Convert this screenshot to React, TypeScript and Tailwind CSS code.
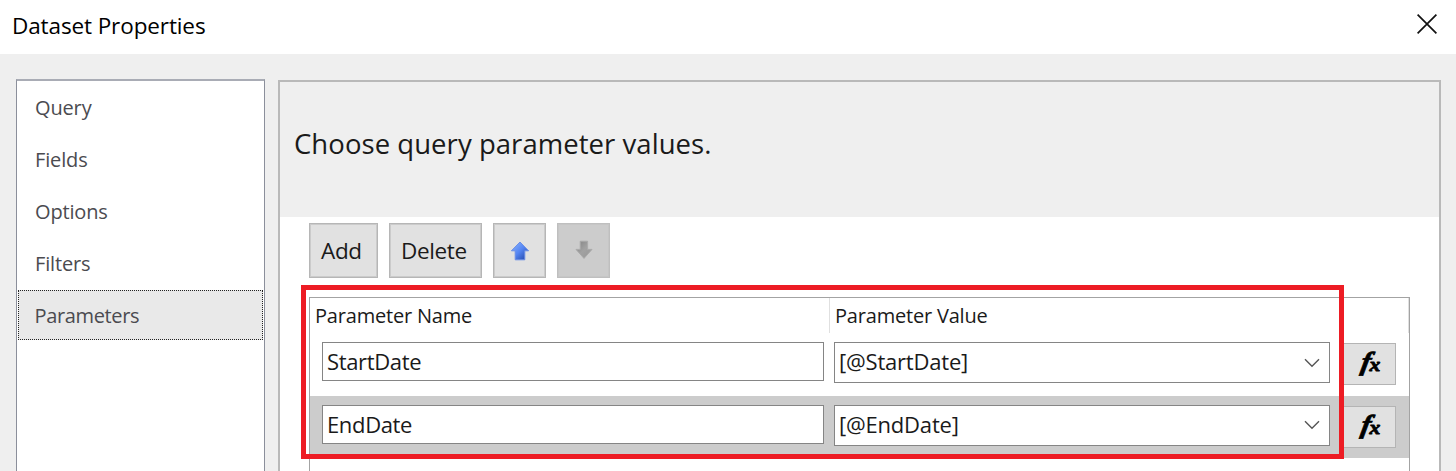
import React from "react";

const navItems = ["Query", "Fields", "Options", "Filters"];

const rows = [
  { name: "StartDate", value: "[@StartDate]", selected: false },
  { name: "EndDate", value: "[@EndDate]", selected: true },
];

function CloseIcon() {
  return (
    <svg width="20" height="20" viewBox="0 0 20 20" fill="none" stroke="#111" strokeWidth="1.7">
      <path d="M0.6 0.6 19.4 19.4M19.4 0.6 0.6 19.4" />
    </svg>
  );
}

function MoveIcon({ down = false }: { down?: boolean }) {
  const id = down ? "moveDown" : "moveUp";
  return (
    <svg width="20" height="20" viewBox="0 0 20 20" className={down ? "-translate-y-px" : ""}>
      <defs>
        <linearGradient id={id} x1="0" y1="0" x2="1" y2="1">
          <stop offset="0" stopColor={down ? "#828282" : "#8fb8ff"} />
          <stop offset="0.5" stopColor={down ? "#a2a2a2" : "#5585f2"} />
          <stop offset="1" stopColor={down ? "#979797" : "#1c3f9e"} />
        </linearGradient>
      </defs>
      <path
        d={down ? "M6.2 1.2H13.6V9.4H18L10 18.4 2 9.4H6.2Z" : "M10 1 18.6 9.8H14.8V18.8H5.2V9.8H1.4Z"}
        fill={`url(#${id})`}
        stroke={down ? "#aaaaaa" : "#6a8ee6"}
        strokeWidth="1"
        strokeLinejoin="round"
      />
    </svg>
  );
}

function Chevron() {
  return (
    <svg width="16" height="10" viewBox="0 0 16 10" fill="none" stroke="#555" strokeWidth="1.4">
      <path d="M1 1.2 8 8.2 15 1.2" />
    </svg>
  );
}

function FxButton() {
  return (
    <button className="flex h-[42px] w-[53px] items-center justify-center border border-[#b4b4b4] bg-[#e1e1e1]">
      <svg
        width="40"
        height="36"
        viewBox="0 0 40 36"
        fill="#000"
        stroke="#000"
        strokeWidth="0.8"
        fontFamily="'Liberation Serif', serif"
        fontStyle="italic"
        fontWeight="700"
        className="overflow-visible"
      >
        <text fontSize="26" transform="translate(10 23.5) skewX(-10) scale(1.12 1)">f</text>
        <text fontSize="18" transform="translate(19.5 25) scale(1.2 1)">x</text>
      </svg>
    </button>
  );
}

export default function App() {
  return (
    <div className="flex h-[471px] w-[1456px] flex-col overflow-hidden bg-[#efefef] font-['Open_Sans','Noto_Sans',sans-serif] text-[#1a1a1a]">
      <header className="flex h-[54px] shrink-0 items-center justify-between bg-white pr-[19px] pl-3 text-black">
        <h1 className="-mt-0.5 text-[22.5px] leading-[52px] tracking-[-0.11px]">Dataset Properties</h1>
        <button aria-label="Close" className="-mt-1.5"><CloseIcon /></button>
      </header>

      <div className="flex min-h-0 flex-1">
        <nav className="mt-[25px] ml-[16px] flex w-[249px] shrink-0 flex-col border-x border-t-2 border-x-[#8b8f9b] border-t-[#a9acb5] bg-white pt-[1px] text-[20px] tracking-[-0.15px] text-[#4b4b50]">
          {navItems.map((n) => (
            <a key={n} className="flex h-[52px] items-center pl-[18px]">{n}</a>
          ))}
          <a className="mr-[1px] ml-[1px] flex h-[50px] items-center border border-dotted border-[#222] bg-[#e9e9e9] pt-0.5 pl-[15.5px] tracking-[-0.35px]">Parameters</a>
        </nav>

        <main className="mt-[26px] ml-[13px] flex w-[1163px] shrink-0 flex-col border-x-2 border-t-2 border-[#b9b9b9] bg-white">
          <div className="flex h-[135px] shrink-0 items-center bg-[#efefef] pl-[14px]">
            <h2 className="-mt-3 text-[27.5px] tracking-[0.05px]">Choose query parameter values.</h2>
          </div>

          <div className="mt-[6px] ml-[29px] flex h-[55px] shrink-0 gap-[11px] text-[22.5px] tracking-[-0.35px]">
            <button className="flex w-[69px] items-center border border-[#b6b6b6] bg-[#e1e1e1] pl-[11px] shadow-[inset_0_0_0_1px_#cbcbcb]">Add</button>
            <button className="flex w-[93px] items-center border border-[#b6b6b6] bg-[#e1e1e1] pl-[11px] shadow-[inset_0_0_0_1px_#cbcbcb]">Delete</button>
            <button aria-label="Move up" className="flex w-[53px] items-center justify-center border border-[#b6b6b6] bg-[#e1e1e1] shadow-[inset_0_0_0_1px_#cbcbcb]"><MoveIcon /></button>
            <button aria-label="Move down" className="flex w-[53px] items-center justify-center border border-[#bfbfbf] bg-[#cccccc] shadow-[inset_0_0_0_1px_#c6c6c6]"><MoveIcon down /></button>
          </div>

          <section className="relative mt-[19px] ml-[29px] flex min-h-0 w-[1101px] flex-1 flex-col border-x border-t border-[#a3a3a3]">
            <div className="flex h-[35px] shrink-0 text-[20px] tracking-[-0.2px]">
              <div className="flex w-[520px] items-center border-r border-[#e0e0e0] pl-[5px]">Parameter Name</div>
              <div className="flex w-[579px] items-center border-r border-[#e0e0e0] pl-[5px]">Parameter Value</div>
            </div>
            {rows.map((r) => (
              <div key={r.name} className={"flex h-[62.5px] shrink-0 items-start pt-[9px] pl-3 " + (r.selected ? "bg-[#cccccc]" : "bg-white")}>
                <div className="flex h-[39px] w-[502px] items-center border border-[#858585] bg-white pl-1 text-[22px] tracking-[-0.35px]">{r.name}</div>
                <div className="ml-[10px] flex h-[41px] w-[496px] items-center justify-between border border-[#858585] bg-white pr-[9px] pl-1 text-[22px] tracking-[-0.2px]">
                  <span className="-mt-0.5">{r.value}</span>
                  <Chevron />
                </div>
                <div className="mt-[1px] ml-[13px]"><FxButton /></div>
              </div>
            ))}
            <div className="pointer-events-none absolute -top-[13px] -left-[9px] h-[174px] w-[1043px] border-5 border-[#ed1c24]" />
          </section>
        </main>
      </div>
    </div>
  );
}
